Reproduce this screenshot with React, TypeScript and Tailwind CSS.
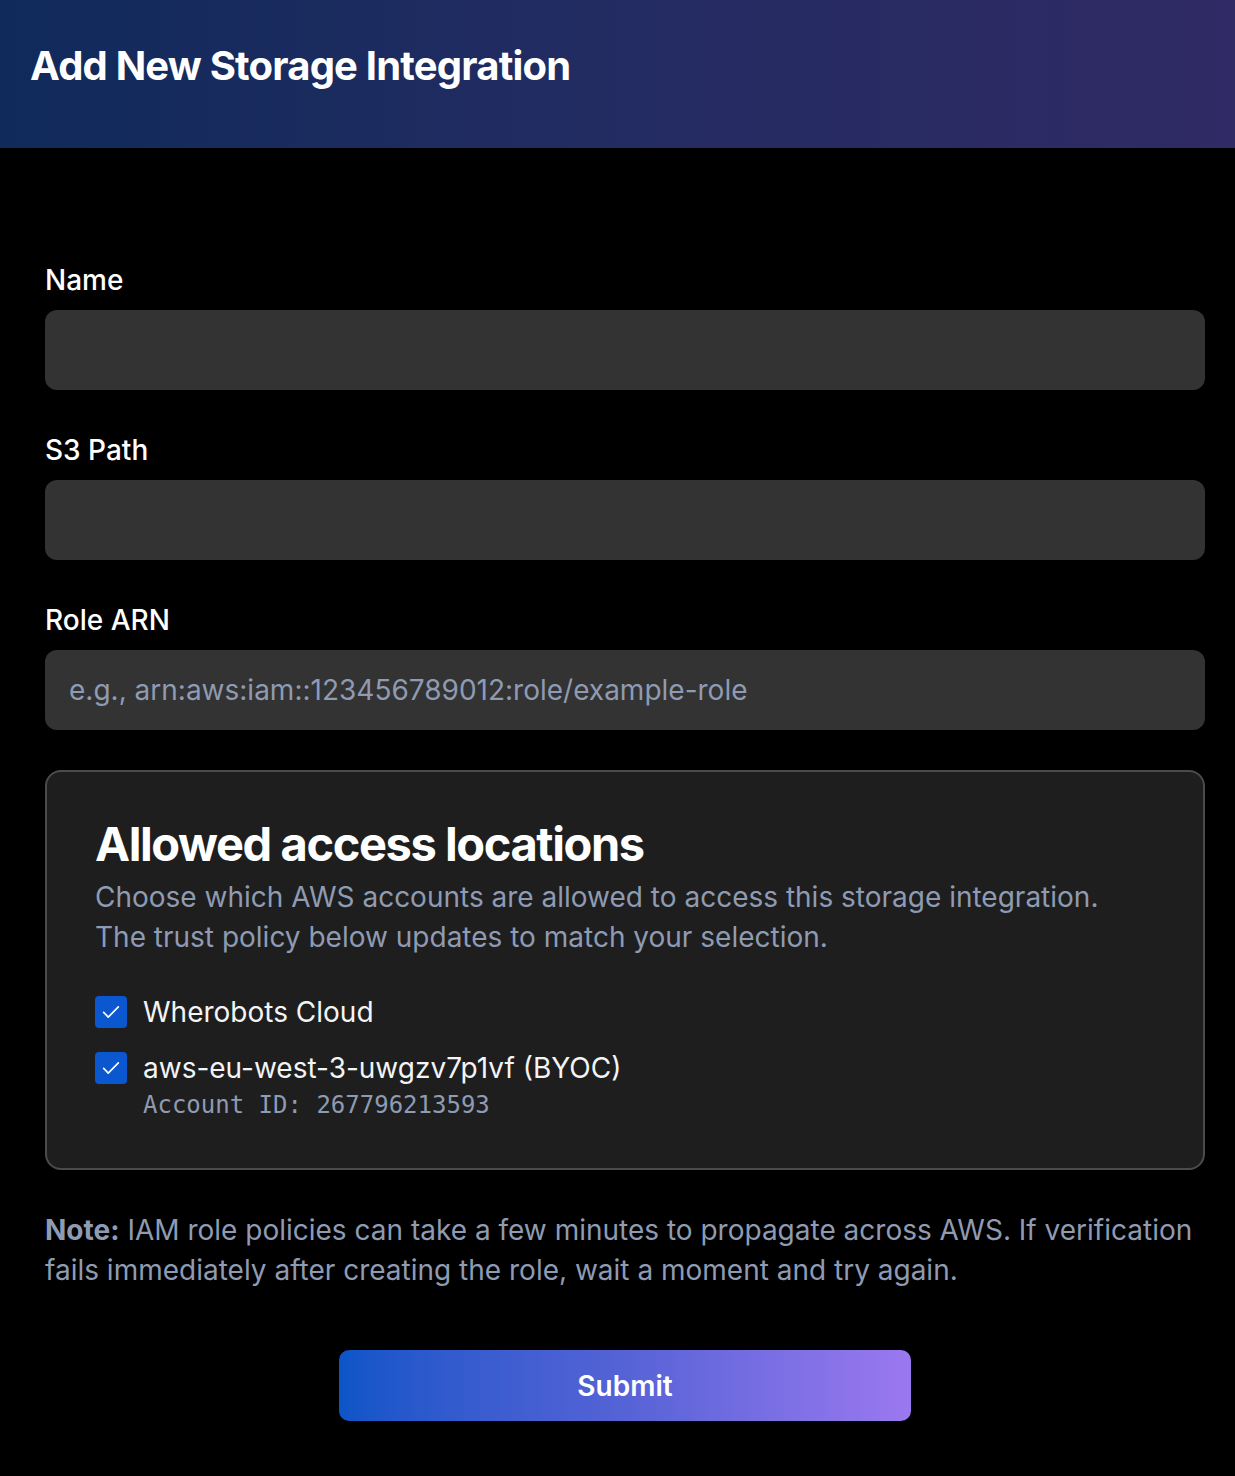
import React, { useState } from 'react';

const CheckBox = ({ checked, onChange }: { checked: boolean; onChange: () => void }) => (
  <button
    type="button"
    onClick={onChange}
    className={`w-8 h-8 shrink-0 rounded-[4px] flex items-center justify-center ${checked ? 'bg-[#0b57d0]' : 'border-2 border-[#6b7280] bg-transparent'}`}
  >
    {checked && (
      <svg width="22" height="22" viewBox="0 0 24 24" fill="none" stroke="white" strokeWidth="1.8" strokeLinecap="round" strokeLinejoin="round">
        <path d="M4 12.5l5 5L20 6.5" />
      </svg>
    )}
  </button>
);

const Field = ({ label, placeholder }: { label: string; placeholder?: string }) => (
  <div className="flex flex-col">
    <label className="text-[28px] leading-[40px] font-medium text-white">{label}</label>
    <input
      placeholder={placeholder}
      className="mt-[10px] h-[80px] w-full rounded-[12px] bg-[#333333] px-6 text-[28px] text-white placeholder:text-[#8e9bb2] outline-none"
    />
  </div>
);

const App = () => {
  const [cloud, setCloud] = useState(true);
  const [byoc, setByoc] = useState(true);

  return (
    <div className="min-h-screen bg-black" style={{ fontFamily: 'Inter, "Noto Sans", sans-serif' }}>
      {/* Header */}
      <div className="h-[148px] bg-gradient-to-r from-[#0f2a5b] via-[#232c62] to-[#302a65] flex items-center pl-[30px] pb-[16px]">
        <h1 className="text-[40px] font-bold text-white tracking-[-0.02em] leading-none">Add New Storage Integration</h1>
      </div>

      <div className="px-[45px] pr-[30px] pt-[112px] pb-[55px]">
        <div className="flex flex-col gap-[40px]">
          <Field label="Name" />
          <Field label="S3 Path" />
          <Field label="Role ARN" placeholder="e.g., arn:aws:iam::123456789012:role/example-role" />
        </div>

        {/* Allowed access locations */}
        <div className="mt-[40px] rounded-[16px] border-2 border-[#4b4b4b] bg-[#1e1e1e] pl-[48px] pr-8 pt-[44px] pb-[47px]">
          <h2 className="text-[47px] leading-[56px] font-bold text-white tracking-[-0.03em]">Allowed access locations</h2>
          <p className="mt-[5px] text-[28px] leading-[40px] text-[#8e9bb2]">
            Choose which AWS accounts are allowed to access this storage integration.
            <br />
            The trust policy below updates to match your selection.
          </p>

          <div className="mt-[39px] flex flex-col gap-[24px]">
            <div className="flex items-center gap-4">
              <CheckBox checked={cloud} onChange={() => setCloud(!cloud)} />
              <span className="text-[28px] leading-[32px] text-[#f3f4f6]">Wherobots Cloud</span>
            </div>
            <div className="flex items-start gap-4">
              <CheckBox checked={byoc} onChange={() => setByoc(!byoc)} />
              <div className="flex flex-col">
                <span className="text-[28px] leading-[32px] text-[#f3f4f6]">aws-eu-west-3-uwgzv7p1vf (BYOC)</span>
                <span className="mt-[5px] text-[24px] leading-[32px] text-[#8e9bb2]" style={{ fontFamily: '"DejaVu Sans Mono", monospace' }}>
                  Account ID: 267796213593
                </span>
              </div>
            </div>
          </div>
        </div>

        <p className="mt-[40px] text-[28px] leading-[40px] text-[#8e9bb2]">
          <span className="font-bold">Note:</span> IAM role policies can take a few minutes to propagate across AWS. If verification fails immediately after creating the role, wait a moment and try again.
        </p>

        <div className="mt-[60px] flex justify-center">
          <button className="w-[572px] h-[71px] rounded-[10px] bg-gradient-to-r from-[#0b55c8] via-[#5563d6] to-[#9b78f0] text-white text-[28px] font-semibold">
            Submit
          </button>
        </div>
      </div>
    </div>
  );
};

export default App;
